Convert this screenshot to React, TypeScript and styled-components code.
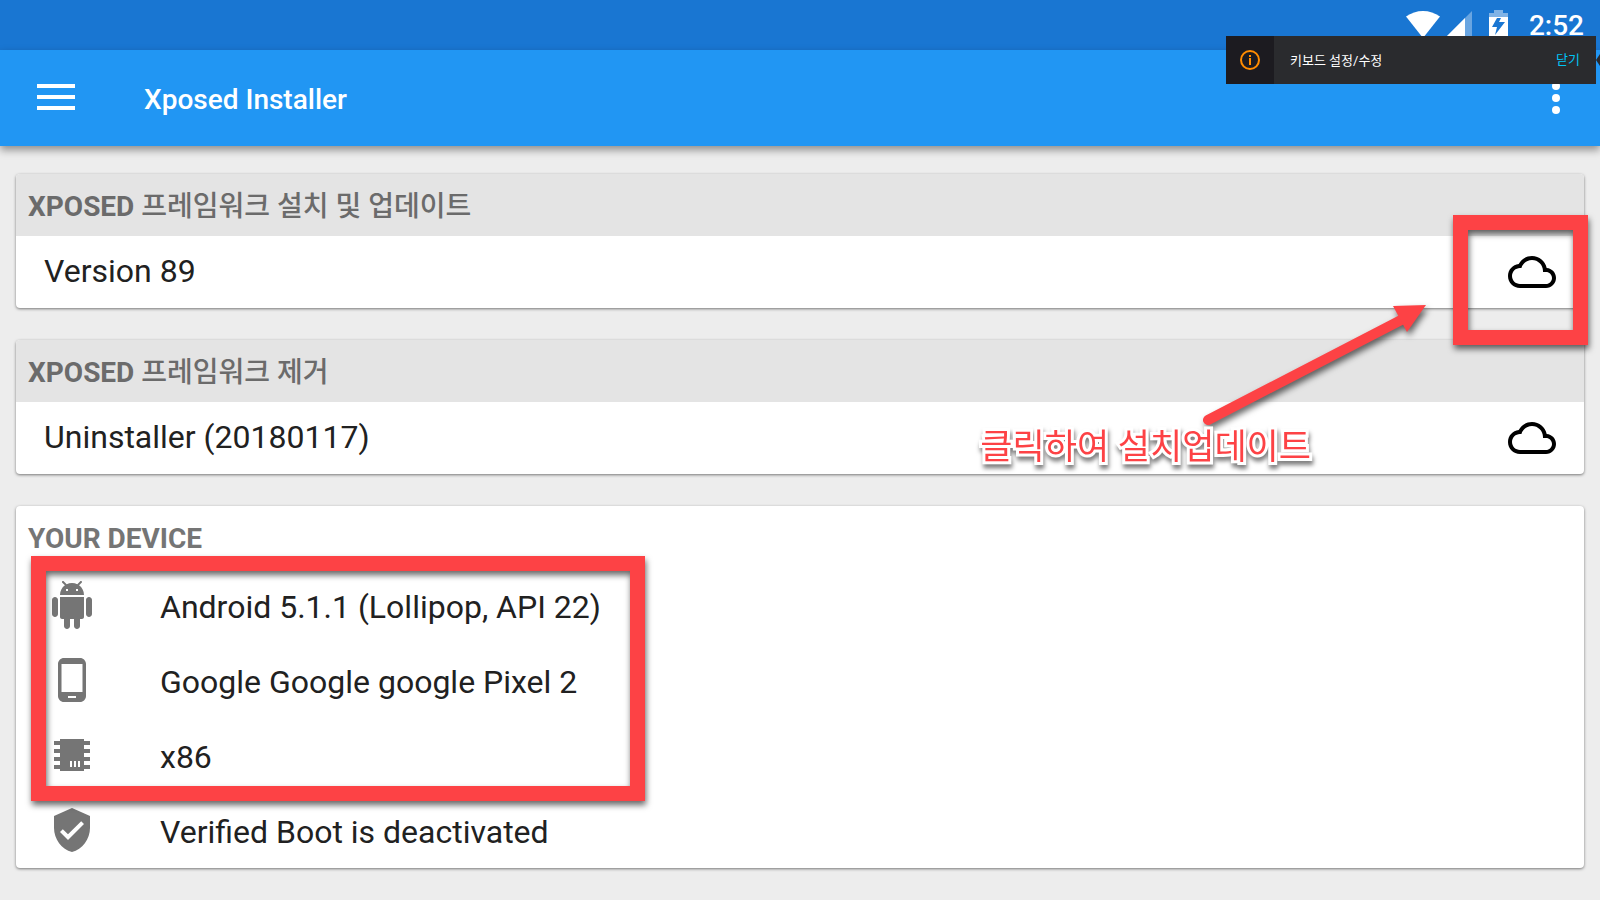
import React from "react";
import styled, { createGlobalStyle } from "styled-components";

const RED = "#fd4245";

const GlobalStyle = createGlobalStyle`
  *, *::before, *::after { box-sizing: border-box; }
  body {
    margin: 0;
    background: #ededed;
    color: #212121;
    font-family: Roboto, "Noto Sans CJK KR", sans-serif;
  }
  button { border: 0; padding: 0; background: none; font: inherit; color: inherit; cursor: pointer; }
  svg { display: block; }
  h1, h2, p, ul { margin: 0; padding: 0; }
`;

const Screen = styled.div`
  position: relative;
  display: flex;
  flex-direction: column;
  min-height: 100vh;
  overflow: hidden;
`;

const StatusBar = styled.div`
  display: flex;
  justify-content: flex-end;
  align-items: flex-start;
  height: 50px;
  padding: 8px 16px 0 0;
  background: #1976d2;
  color: #fff;
`;

const StatusIcons = styled.svg`
  width: 104px;
  height: 34px;
  margin-right: 20px;
`;

const Clock = styled.time`
  font-size: 28px;
  font-weight: 500;
  line-height: 36px;
`;

const Toolbar = styled.header`
  display: flex;
  align-items: center;
  height: 96px;
  padding: 0 20px 0 32px;
  background: #2196f3;
  color: #fff;
  box-shadow: 0 4px 8px rgba(0, 0, 0, 0.4);
`;

const IconButton = styled.button`
  display: grid;
  place-items: center;
  width: 48px;
  height: 48px;
`;

const AppTitle = styled.h1`
  flex: 1;
  padding: 4px 0 0 64px;
  font-size: 28px;
  font-weight: 500;
  line-height: 36px;
`;

const Cards = styled.main`
  display: flex;
  flex-direction: column;
  gap: 32px;
  padding: 28px 16px 32px;
`;

const Card = styled.section`
  border-radius: 4px;
  background: #fff;
  box-shadow: 0 1px 3px rgba(0, 0, 0, 0.5);
`;

const CardHeader = styled.h2<{ $shaded?: boolean }>`
  height: 62px;
  padding: 4px 12px 0;
  border-radius: 4px 4px 0 0;
  background: ${(p) => (p.$shaded ? "#e4e4e4" : "transparent")};
  color: ${(p) => (p.$shaded ? "#6b6b6b" : "#757575")};
  font-size: 28px;
  font-weight: 700;
  line-height: 58px;
`;

const Korean = styled.span`
  font-weight: 500;
`;

const VersionRow = styled.div`
  display: flex;
  align-items: center;
  justify-content: space-between;
  height: 72px;
  padding: 0 28px;
`;

const VersionName = styled.span`
  padding-bottom: 2px;
  font-size: 32px;
  line-height: 40px;
`;

const DeviceList = styled.ul`
  list-style: none;
`;

const DeviceRow = styled.li`
  display: flex;
  align-items: center;
  gap: 64px;
  height: 75px;
  padding: 0 32px 2px;
  svg { color: #757575; }
`;

const DeviceText = styled.span`
  padding-top: 4px;
  font-size: 32px;
  line-height: 40px;
`;

const Toast = styled.aside`
  position: absolute;
  top: 36px;
  right: 4px;
  display: flex;
  align-items: center;
  width: 370px;
  height: 48px;
  background: #2a2b2e;
  color: #fff;
  font-size: 13px;
  &::after {
    content: "";
    position: absolute;
    left: 100%;
    top: 18px;
    border: 6px solid transparent;
    border-right-width: 4px;
    border-left: 0;
    border-right-color: #2a2b2e;
  }
`;

const ToastIcon = styled.span`
  display: grid;
  place-items: center;
  width: 48px;
  height: 48px;
  background: #1c1b20;
`;

const ToastText = styled.p`
  flex: 1;
  padding: 0 0 2px 16px;
`;

const ToastClose = styled.button`
  margin-right: 16px;
  padding-bottom: 4px;
  color: #00c4f5;
`;

const Highlight = styled.div`
  position: absolute;
  border: 15px solid ${RED};
  filter: drop-shadow(1px 4px 3px rgba(0, 0, 0, 0.6));
  pointer-events: none;
`;

const CloudHighlight = styled(Highlight)`
  top: 215px;
  right: 12px;
  width: 135px;
  height: 130px;
`;

const DeviceHighlight = styled(Highlight)`
  top: 556px;
  left: 31px;
  width: 614px;
  height: 245px;
`;

const Arrow = styled.svg`
  position: absolute;
  top: 295px;
  right: 165px;
  width: 240px;
  height: 140px;
  filter: drop-shadow(2px 4px 3px rgba(0, 0, 0, 0.6));
  pointer-events: none;
`;

const Callout = styled.p`
  position: absolute;
  top: 424px;
  right: 289px;
  color: ${RED};
  font-size: 35px;
  line-height: 48px;
  white-space: nowrap;
  -webkit-text-stroke: 6px #fff;
  paint-order: stroke fill;
  filter: drop-shadow(1px 4px 2px rgba(0, 0, 0, 0.5));
  pointer-events: none;
`;

const Glyph = ({ d }: { d: string }) => (
  <svg width="48" height="48" viewBox="0 0 24 24" fill="currentColor" aria-hidden="true">
    <path fillRule="evenodd" d={d} />
  </svg>
);

const CLOUD =
  "M19.35 10.04C18.67 6.59 15.64 4 12 4 9.11 4 6.6 5.64 5.35 8.04 2.34 8.36 0 10.91 0 14c0 3.31 2.69 6 6 6h13c2.76 0 5-2.24 5-5 0-2.64-2.05-4.78-4.65-4.96zM19 18H6c-2.21 0-4-1.79-4-4s1.79-4 4-4h.71C7.37 7.69 9.48 6 12 6c3.04 0 5.5 2.46 5.5 5.5v.5H19c1.66 0 3 1.34 3 3s-1.34 3-3 3z";
const ANDROID =
  "M6 18c0 .55.45 1 1 1h1v3.5c0 .83.67 1.5 1.5 1.5s1.5-.67 1.5-1.5V19h2v3.5c0 .83.67 1.5 1.5 1.5s1.5-.67 1.5-1.5V19h1c.55 0 1-.45 1-1V8H6v10zM3.5 8C2.67 8 2 8.67 2 9.5v7c0 .83.67 1.5 1.5 1.5S5 17.33 5 16.5v-7C5 8.67 4.33 8 3.5 8zm17 0c-.83 0-1.5.67-1.5 1.5v7c0 .83.67 1.5 1.5 1.5s1.5-.67 1.5-1.5v-7c0-.83-.67-1.5-1.5-1.5zm-4.97-5.84l1.3-1.3c.2-.2.2-.51 0-.71-.2-.2-.51-.2-.71 0l-1.48 1.48C13.85 1.23 12.95 1 12 1c-.96 0-1.86.23-2.66.63L7.85.15c-.2-.2-.51-.2-.71 0-.2.2-.2.51 0 .71l1.31 1.31C6.97 3.26 6 5.01 6 7h12c0-1.99-.97-3.75-2.47-4.84zM10 5H9V4h1v1zm5 0h-1V4h1v1z";
const PHONE =
  "M16 1H8C6.34 1 5 2.34 5 4v16c0 1.66 1.34 3 3 3h8c1.66 0 3-1.34 3-3V4c0-1.66-1.34-3-3-3zm-2 20h-4v-1h4v1zm3.25-3H6.75V4h10.5v14z";
const CHIP =
  "M6 4h12v1h3v2h-3v2h3v2h-3v2h3v2h-3v2h3v2h-3v1H6v-1H3v-2h3v-2H3v-2h3v-2H3V9h3V7H3V5h3zM11 15v3h1v-3zM13 15v3h1v-3zM15 15v3h1v-3z";
const SHIELD =
  "M12 1L3 5v6c0 5.55 3.84 10.74 9 12 5.16-1.26 9-6.45 9-12V5l-9-4zm-2 16l-4-4 1.41-1.41L10 14.17l6.59-6.59L18 9l-8 8z";

const packages = [
  { title: "프레임워크 설치 및 업데이트", name: "Version 89" },
  { title: "프레임워크 제거", name: "Uninstaller (20180117)" },
];

const device = [
  { icon: ANDROID, text: "Android 5.1.1 (Lollipop, API 22)" },
  { icon: PHONE, text: "Google Google google Pixel 2" },
  { icon: CHIP, text: "x86" },
  { icon: SHIELD, text: "Verified Boot is deactivated" },
];

export default function App() {
  return (
    <Screen>
      <GlobalStyle />
      <StatusBar>
        <StatusIcons viewBox="0 0 104 34" fill="#fff" aria-hidden="true">
          <path d="M1 8.500C11 1 25 1 35 8.500L18 30z" />
          <path d="M67 3v28H39z" opacity=".35" />
          <path d="M60 10v21H39z" />
          <path d="M89 2h9v3h5v4H84V5h5z" opacity=".45" />
          <path fillRule="evenodd" d="M84 9h19v22H84z M92 10l-5 9h5l-2 8 10-13h-6l2-4z" />
        </StatusIcons>
        <Clock>2:52</Clock>
      </StatusBar>

      <Toolbar>
        <IconButton aria-label="Menu">
          <svg width="38" height="28" viewBox="0 0 38 28" fill="#fff" aria-hidden="true">
            <path d="M0 0h38v4H0zM0 11h38v4H0zM0 22h38v4H0z" />
          </svg>
        </IconButton>
        <AppTitle>Xposed Installer</AppTitle>
        <IconButton aria-label="More options">
          <svg width="8" height="32" viewBox="0 0 8 32" fill="#fff" aria-hidden="true">
            <circle cx="4" cy="4" r="4" />
            <circle cx="4" cy="16" r="4" />
            <circle cx="4" cy="28" r="4" />
          </svg>
        </IconButton>
      </Toolbar>

      <Cards>
        {packages.map((p) => (
          <Card key={p.name}>
            <CardHeader $shaded>
              XPOSED <Korean lang="ko">{p.title}</Korean>
            </CardHeader>
            <VersionRow>
              <VersionName>{p.name}</VersionName>
              <IconButton aria-label={`Download ${p.name}`}>
                <svg width="48" height="48" viewBox="0 0 24 24" fill="#000" aria-hidden="true">
                  <path d={CLOUD} />
                </svg>
              </IconButton>
            </VersionRow>
          </Card>
        ))}
        <Card>
          <CardHeader>YOUR DEVICE</CardHeader>
          <DeviceList>
            {device.map((d) => (
              <DeviceRow key={d.text}>
                <Glyph d={d.icon} />
                <DeviceText>{d.text}</DeviceText>
              </DeviceRow>
            ))}
          </DeviceList>
        </Card>
      </Cards>

      <CloudHighlight />
      <DeviceHighlight />
      <Arrow viewBox="0 0 240 140" fill={RED} aria-hidden="true">
        <path d="M13 125L210 23" stroke={RED} strokeWidth="10" strokeLinecap="round" />
        <path d="M198 11l33-1-19 27z" />
      </Arrow>
      <Callout lang="ko">클릭하여 설치업데이트</Callout>

      <Toast lang="ko">
        <ToastIcon>
          <svg width="20" height="20" viewBox="0 0 20 20" fill="#ff8c00" aria-hidden="true">
            <circle cx="10" cy="10" r="9" fill="none" stroke="#ff8c00" strokeWidth="2" />
            <path d="M9 5h2v2H9zM9 8h2v7H9z" />
          </svg>
        </ToastIcon>
        <ToastText>키보드 설정/수정</ToastText>
        <ToastClose>닫기</ToastClose>
      </Toast>
    </Screen>
  );
}
